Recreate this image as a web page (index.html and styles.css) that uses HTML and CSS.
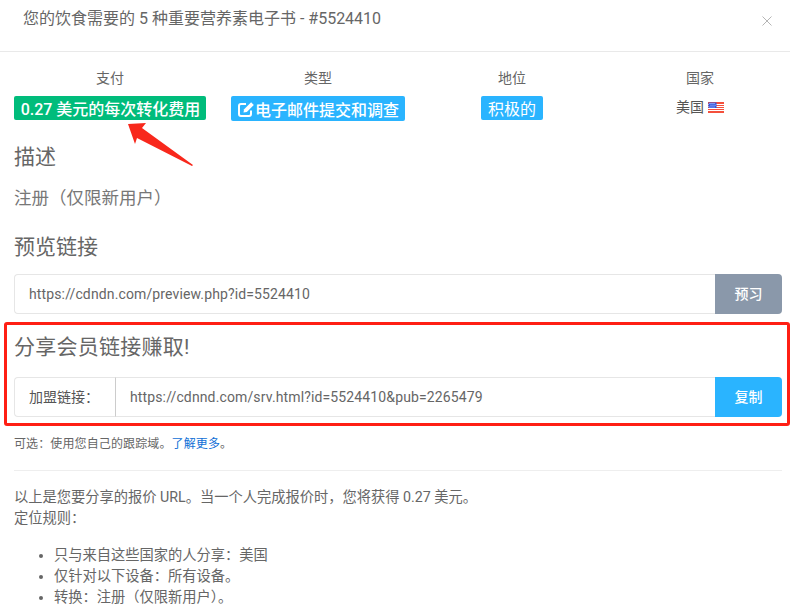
FILE: index.html
```html
<!DOCTYPE html>
<html lang="zh-CN">
<head>
<meta charset="utf-8">
<title>优惠详情</title>
<link rel="stylesheet" href="styles.css">
</head>
<body>
<div class="modal">
  <header class="modal-header">
    <h5 class="modal-title">您的饮食需要的 5 种重要营养素电子书 - #5524410</h5>
    <svg class="close" viewBox="0 0 10 10" aria-label="关闭"><path d="M.5.5l9 9M9.5.5l-9 9"/></svg>
  </header>
  <main class="modal-body">
    <div class="stats">
      <div class="stat"><div class="stat-label">支付</div><span class="tag tag-green">0.27 美元的每次转化费用</span></div>
      <div class="stat"><div class="stat-label">类型</div><span class="tag tag-blue"><svg class="edit" viewBox="0 0 18 18"><path class="edit-box" d="M14 10.5V14a2 2 0 0 1-2 2H4a2 2 0 0 1-2-2V6a2 2 0 0 1 2-2h5"/><path class="edit-pen" d="M6.5 12.5l.6-3.3 7-7 2.7 2.7-7 7z"/></svg>电子邮件提交和调查</span></div>
      <div class="stat"><div class="stat-label">地位</div><span class="tag tag-blue tag-plain">积极的</span></div>
      <div class="stat stat-country"><div class="stat-label">国家</div><div class="country">美国 <svg class="flag" viewBox="0 0 16 11"><rect width="16" height="11" fill="#f4503c"/><path d="M0 2.5h16M0 4.5h16M0 6.5h16M0 8.5h16" stroke="#fff" stroke-width="1"/><rect x=".5" y=".5" width="8" height="5.5" fill="#2f55e0"/><path d="M1.5 1.5h1M3.5 1.5h1M5.5 1.5h1M2.5 3.2h1M4.5 3.2h1M6.5 3.2h1M1.5 5h1M3.5 5h1M5.5 5h1" stroke="#fff" stroke-width=".8"/></svg></div></div>
    </div>

    <h4 class="heading heading-desc">描述</h4>
    <p class="lead">注册（仅限新用户）</p>

    <h4 class="heading heading-preview">预览链接</h4>
    <div class="input-group">
      <div class="input">https://cdndn.com/preview.php?id=5524410</div>
      <div class="btn btn-gray">预习</div>
    </div>

    <section class="highlight">
      <h4 class="heading heading-share">分享会员链接赚取!</h4>
      <div class="input-group">
        <div class="prepend">加盟链接：</div>
        <div class="input input-joined">https://cdnnd.com/srv.html?id=5524410&amp;pub=2265479</div>
        <div class="btn btn-blue">复制</div>
      </div>
    </section>

    <p class="hint">可选：使用您自己的跟踪域。<a href="#">了解更多</a>。</p>
    <hr class="rule">
    <p class="text">以上是您要分享的报价 URL。当一个人完成报价时，您将获得 0.27 美元。<br>定位规则：</p>
    <ul class="rules">
      <li>只与来自这些国家的人分享：美国</li>
      <li>仅针对以下设备：所有设备。</li>
      <li>转换：注册（仅限新用户）。</li>
    </ul>
  </main>
  <svg class="arrow" viewBox="0 0 70 50"><polygon points="0,0 18,-1 14,4 65,41 64,42 9,14 7,20"/></svg>
</div>
</body>
</html>
```

FILE: styles.css
```css
* { box-sizing: border-box; }
html, body { margin: 0; height: 100%; overflow: hidden; }
body {
  background: #fff;
  color: #555;
  font-family: Roboto, "Noto Sans CJK SC", sans-serif;
  font-size: 14px;
}
.modal { position: relative; height: 613px; overflow: hidden; }
.modal-header {
  height: 52px;
  padding: 9px 16px 0 23px;
  border-bottom: 1px solid #e9e9e9;
  display: flex;
  justify-content: space-between;
  align-items: flex-start;
}
.modal-title { margin: 0; font-size: 16px; font-weight: 400; line-height: 20px; color: #666; }
.close { width: 10px; height: 10px; margin: 7px 2px 0 0; flex: none; }
.close path { stroke: #b5b5b5; stroke-width: 1; fill: none; }
.modal-body { padding: 16px 8px 0 14px; }
.stats { display: grid; grid-template-columns: 192px 224px 164px 1fr; height: 68px; }
.stat { display: flex; flex-direction: column; align-items: center; }
.stat-country { padding-left: 24px; }
.stat-label { font-size: 14px; line-height: 20px; margin-bottom: 8px; color: #666; }
.tag {
  display: inline-flex;
  align-items: center;
  height: 24px;
  padding: 0 6px 0 7px;
  border-radius: 2px;
  color: #fff;
  font-size: 16px;
  font-weight: 500;
  white-space: nowrap;
}
.tag-green { background: #00bc7b; }
.tag-blue { background: #2ab4ff; padding: 0 6px; height: 25px; }
.tag-plain { height: 24px; font-weight: 400; padding: 0 6.5px; }
.edit { width: 18px; height: 18px; flex: none; }
.edit-box { fill: none; stroke: #fff; stroke-width: 2; }
.edit-pen { fill: #fff; }
.country { display: flex; align-items: center; gap: 4px; line-height: 20px; color: #555; margin-top: 1px; }
.flag { width: 16px; height: 11px; }
.heading { margin: 0; font-weight: 400; font-size: 21px; line-height: 28px; color: #666; }
.heading-desc { margin-top: 7px; }
.lead { margin: 14px 0 0; font-size: 17.5px; line-height: 26px; color: #777; }
.heading-preview { margin-top: 22px; }
.input-group { display: flex; height: 40px; }
.heading-preview + .input-group { margin-top: 13px; }
.input {
  flex: 1;
  border: 1px solid #e6e6e6;
  border-right: 0;
  border-radius: 4px 0 0 4px;
  padding: 0 14px;
  line-height: 38px;
  color: #666;
  font-size: 14px;
  letter-spacing: .13px;
}
.input-joined { border-radius: 0; border-left: 1px solid #ccc; }
.prepend {
  width: 101px;
  border: 1px solid #e6e6e6;
  border-right: 0;
  border-radius: 4px 0 0 4px;
  padding-left: 14px;
  line-height: 38px;
  color: #555;
}
.btn {
  width: 67px;
  border-radius: 0 4px 4px 0;
  color: #fff;
  text-align: center;
  line-height: 40px;
  font-weight: 500;
  font-size: 14px;
}
.btn-gray { background: #8a98aa; }
.btn-blue { background: #2ab4ff; }
.highlight {
  margin: 8px -8px 0 -10px;
  padding: 8px 5px 0 7px;
  height: 104px;
  border: 3px solid #ff1f14;
  border-radius: 3px;
}
.heading-share { margin-bottom: 16px; letter-spacing: .25px; }
.hint { margin: 9px 0 0; font-size: 12px; line-height: 18px; color: #666; letter-spacing: .12px; }
.hint a { color: #0f6fd6; text-decoration: none; }
.rule { margin: 17px 0 0; border: 0; border-top: 1px solid #eee; }
.text { margin: 16px 0 0; font-size: 14.25px; line-height: 21px; color: #666; }
.rules { margin: 16px 0 0; padding-left: 40px; font-size: 14.25px; line-height: 21px; color: #666; }
.arrow { position: absolute; left: 128px; top: 124px; width: 70px; height: 50px; overflow: visible; }
.arrow polygon { fill: #f8281c; }
```
